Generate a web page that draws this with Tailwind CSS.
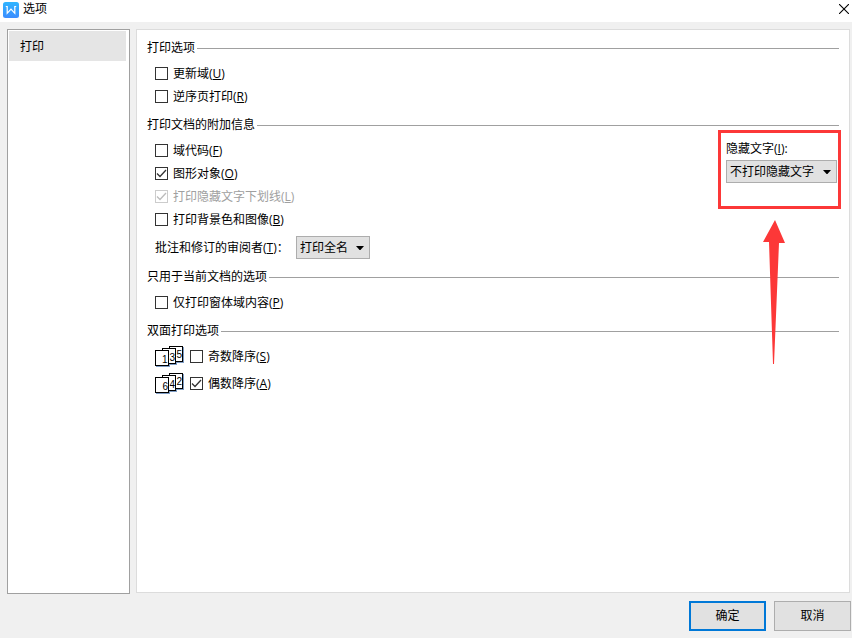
<!DOCTYPE html>
<html lang="zh-CN">
<head>
<meta charset="utf-8">
<meta name="viewport" content="width=device-width, initial-scale=1">
<title>选项</title>
<script src="https://cdn.jsdelivr.net/npm/@tailwindcss/browser@4"></script>
</head>
<body class="flex min-h-screen flex-col bg-[#f0f0f0] font-['Open_Sans','Noto_Sans_CJK_SC',sans-serif] text-[12px] leading-[18px] text-black">
<!-- Check mark shared by all tick boxes -->
<svg class="hidden">
  <symbol id="tick" viewBox="0 0 13 13"><path d="M2 6.5 L5 9.5 L11 3" fill="none" stroke="currentColor" stroke-width="1.3"/></symbol>
  <symbol id="caret" viewBox="0 0 8 4"><path d="M0 0H8L4 4.5Z" fill="currentColor"/></symbol>
</svg>

<header class="flex h-[22px] items-start justify-between bg-white pr-[3px] pl-[3px]">
  <div class="flex items-center gap-1">
    <svg class="mt-px size-4" viewBox="0 0 16 16" aria-hidden="true">
      <defs><linearGradient id="logo" x1="0" y1="0" x2="0" y2="1"><stop offset="0" stop-color="#2fb5ff"/><stop offset="1" stop-color="#3c8dff"/></linearGradient></defs>
      <rect width="16" height="16" rx="2.5" fill="url(#logo)"/>
      <path d="M2.8 4.5H4.2V11.3L8 7.2L11.8 11.3V4.5H13.2" fill="none" stroke="#fff" stroke-width="1.2"/>
    </svg>
    <h1>选项</h1>
  </div>
  <button type="button" aria-label="关闭" class="mt-1">
    <svg class="size-[10px]" viewBox="0 0 10 10"><path d="M0 0L10 10M10 0L0 10" stroke="#000" stroke-width="1.1"/></svg>
  </button>
</header>

<div class="flex flex-1 gap-[6px] pt-[7px] pr-[2px] pl-[7px]">
  <nav class="w-[123px] shrink-0 border border-[#a0a0a0] bg-white pt-px pr-[3px] pl-px">
    <a href="#print" class="block bg-[#e5e5e5] pt-[7px] pb-[5px] pl-[11px]">打印</a>
  </nav>

  <main id="print" class="mb-px min-w-0 flex-1 border border-[#dcdcdc] bg-white px-[10px] pt-[9px]">
    <section>
      <h2 class="flex items-center gap-[2px]">打印选项<span class="h-px flex-1 bg-[#a0a0a0]"></span></h2>
      <div class="mt-[5px] pl-2">
        <label class="flex h-[23px] items-center gap-[5px]"><input type="checkbox" class="size-[13px] appearance-none border border-[#333] bg-white"><span>更新域(<u>U</u>)</span></label>
        <label class="flex h-[23px] items-center gap-[5px]"><input type="checkbox" class="size-[13px] appearance-none border border-[#333] bg-white"><span>逆序页打印(<u>R</u>)</span></label>
      </div>
    </section>

    <section class="mt-2">
      <h2 class="flex items-center gap-[2px]">打印文档的附加信息<span class="h-px flex-1 bg-[#a0a0a0]"></span></h2>
      <div class="mt-[5px] flex items-start justify-between pr-[2px] pl-2">
        <div>
          <label class="flex h-[23px] items-center gap-[5px]"><input type="checkbox" class="size-[13px] appearance-none border border-[#333] bg-white"><span>域代码(<u>F</u>)</span></label>
          <label class="flex h-[23px] items-center gap-[5px]"><span class="grid text-[#333]"><input type="checkbox" checked class="peer col-start-1 row-start-1 size-[13px] appearance-none border border-[#333] bg-white"><svg class="pointer-events-none invisible col-start-1 row-start-1 size-[13px] peer-checked:visible"><use href="#tick"/></svg></span><span>图形对象(<u>O</u>)</span></label>
          <label class="flex h-[23px] items-center gap-[5px] text-[#a0a0a0]"><span class="grid text-[#bcbcbc]"><input type="checkbox" checked disabled class="peer col-start-1 row-start-1 size-[13px] appearance-none border border-[#cccccc] bg-white"><svg class="pointer-events-none invisible col-start-1 row-start-1 size-[13px] peer-checked:visible"><use href="#tick"/></svg></span><span>打印隐藏文字下划线(<u>L</u>)</span></label>
          <label class="flex h-[23px] items-center gap-[5px]"><input type="checkbox" class="size-[13px] appearance-none border border-[#333] bg-white"><span>打印背景色和图像(<u>B</u>)</span></label>
          <div class="mt-[5px] flex items-center">
            <label for="reviewer" class="w-[141px] whitespace-nowrap">批注和修订的审阅者(<u>T</u>)：</label>
            <div class="grid items-center">
              <select id="reviewer" class="col-start-1 row-start-1 h-[23px] w-[74px] appearance-none border border-[#adadad] bg-[#e1e1e1] pl-[3px]"><option>打印全名</option></select>
              <svg class="pointer-events-none col-start-1 row-start-1 mr-[6px] h-1 w-2 justify-self-end"><use href="#caret"/></svg>
            </div>
          </div>
        </div>

        <div class="relative mt-px w-[111px]">
          <label for="hidden-text">隐藏文字(<u>I</u>):</label>
          <div class="mt-[2px] grid items-center">
            <select id="hidden-text" class="col-start-1 row-start-1 h-[23px] w-full appearance-none border border-[#adadad] bg-[#e1e1e1] pl-[3px]"><option>不打印隐藏文字</option></select>
            <svg class="pointer-events-none col-start-1 row-start-1 mr-[6px] h-1 w-2 justify-self-end"><use href="#caret"/></svg>
          </div>
          <!-- Red callout frame and arrow -->
          <div class="pointer-events-none absolute -top-[10px] -right-1 -left-2 h-[79px] border-3 border-[#fc3838]"></div>
          <svg class="pointer-events-none absolute top-20 left-[37px] h-36 w-[22px]" viewBox="0 0 22 144" aria-hidden="true"><path d="M12 0L22 23H16L11 144H10L6 22H0Z" fill="#fc3838"/></svg>
        </div>
      </div>
    </section>

    <section class="mt-[9px]">
      <h2 class="flex items-center gap-[2px]">只用于当前文档的选项<span class="h-px flex-1 bg-[#a0a0a0]"></span></h2>
      <div class="mt-[5px] pl-2">
        <label class="flex h-[23px] items-center gap-[5px]"><input type="checkbox" class="size-[13px] appearance-none border border-[#333] bg-white"><span>仅打印窗体域内容(<u>P</u>)</span></label>
      </div>
    </section>

    <section class="mt-2">
      <h2 class="flex items-center gap-[2px]">双面打印选项<span class="h-px flex-1 bg-[#a0a0a0]"></span></h2>
      <div class="mt-[3px] pl-2">
        <div class="flex h-[27px] items-center gap-[6px]">
          <svg class="h-[21px] w-[29px] font-['Liberation_Sans',sans-serif] text-[10px]" viewBox="0 0 29 21" aria-hidden="true">
            <g fill="#7e9cc4"><rect x="15" y="1" width="14" height="16"/><rect x="8" y="3" width="14" height="16"/><rect x="1" y="5" width="14" height="16"/></g>
            <g fill="#fff" stroke="#000"><rect x="14.5" y=".5" width="13" height="15"/><rect x="7.5" y="2.5" width="13" height="15"/><rect x=".5" y="4.5" width="13" height="15"/></g>
            <text x="7" y="17">1</text><text x="14.5" y="15">3</text><text x="21.5" y="12">5</text>
          </svg>
          <label class="flex items-center gap-[5px]"><input type="checkbox" class="size-[13px] appearance-none border border-[#333] bg-white"><span>奇数降序(<u>S</u>)</span></label>
        </div>
        <div class="flex h-[27px] items-center gap-[6px]">
          <svg class="h-[21px] w-[29px] font-['Liberation_Sans',sans-serif] text-[10px]" viewBox="0 0 29 21" aria-hidden="true">
            <g fill="#7e9cc4"><rect x="15" y="1" width="14" height="16"/><rect x="8" y="3" width="14" height="16"/><rect x="1" y="5" width="14" height="16"/></g>
            <g fill="#fff" stroke="#000"><rect x="14.5" y=".5" width="13" height="15"/><rect x="7.5" y="2.5" width="13" height="15"/><rect x=".5" y="4.5" width="13" height="15"/></g>
            <text x="7.5" y="17">6</text><text x="14.5" y="15">4</text><text x="21.5" y="12">2</text>
          </svg>
          <label class="flex items-center gap-[5px]"><span class="grid text-[#333]"><input type="checkbox" checked class="peer col-start-1 row-start-1 size-[13px] appearance-none border border-[#333] bg-white"><svg class="pointer-events-none invisible col-start-1 row-start-1 size-[13px] peer-checked:visible"><use href="#tick"/></svg></span><span>偶数降序(<u>A</u>)</span></label>
        </div>
      </div>
    </section>
  </main>
</div>

<footer class="flex justify-end gap-2 pt-[7px] pr-px pb-[7px]">
  <button type="button" class="h-[30px] w-[77px] border-2 border-[#0078d7] bg-[#e1e1e1]">确定</button>
  <button type="button" class="h-[30px] w-[77px] border border-[#adadad] bg-[#e1e1e1]">取消</button>
</footer>
</body>
</html>
